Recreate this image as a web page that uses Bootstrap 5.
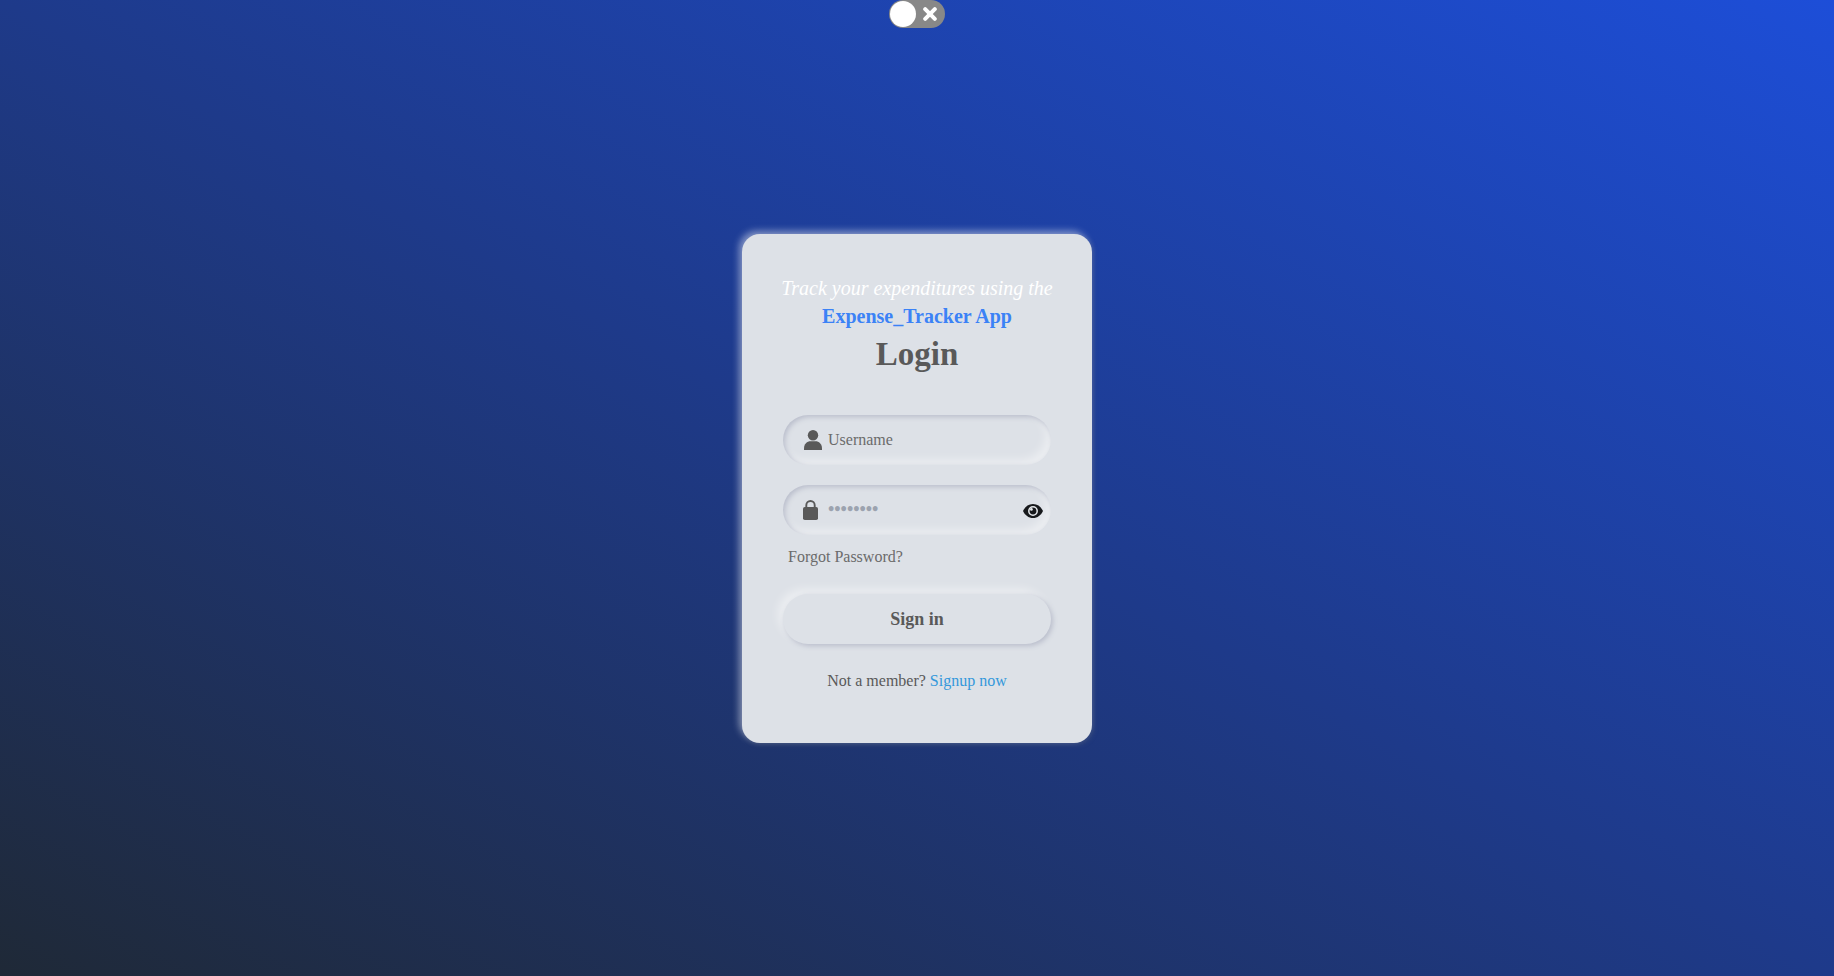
<!DOCTYPE html>
<html lang="en">
<head>
<meta charset="utf-8">
<meta name="viewport" content="width=device-width, initial-scale=1">
<title>Expense_Tracker App - Login</title>
<link href="https://cdn.jsdelivr.net/npm/bootstrap@5.3.0/dist/css/bootstrap.min.css" rel="stylesheet">
<style>
  body {
    font-family: "Liberation Serif", "Times New Roman", serif;
    color: #595959;
    background: linear-gradient(to top right, #1f2937, #1e3a8a, #1d4ed8) no-repeat;
  }
  .theme-switch { top: 0; left: 0; right: 0; }
  .theme-switch label { width: 56px; height: 28px; border-radius: 14px; background: #888; cursor: pointer; padding: 1px; }
  .theme-switch .knob { width: 26px; height: 26px; border-radius: 50%; background: #fff; }
  .theme-switch svg { width: 14px; height: 14px; margin: 0 7px 0 auto; }
  .login-panel {
    width: 350px;
    padding: 40px 41px;
    background: #dde1e7;
    border-radius: 18px;
    box-shadow: -3px -3px 7px #ffffff73, 2px 2px 5px rgba(94, 104, 121, .288);
  }
  .tagline { font-size: 20px; line-height: 28px; margin: 0 -10px; }
  .brand-name { color: #3b82f6; }
  .login-title { font-size: 33px; line-height: 48px; margin-bottom: 37px; }
  .login-fields { gap: 20px; }
  .pill-field { height: 50px; }
  .pill-input.form-control {
    height: 50px;
    padding: 0 45px;
    font-size: 16px;
    color: #595959;
    background: #dde1e7;
    border: 0;
    border-radius: 25px;
    box-shadow: inset 2px 2px 5px #babecc, inset -5px -5px 10px #ffffff73;
  }
  .pill-input::placeholder { color: #6b6b6b; opacity: 1; }
  .pill-input[type=password] { font-size: 18px; font-weight: 700; }
  .pill-input[type=password]::placeholder { color: #9ca3af; }
  .field-icon { top: 0; bottom: 0; left: 20px; pointer-events: none; }
  .eye-toggle { top: 2px; bottom: 0; right: 8px; }
  .forgot-link { margin: 10px 0 25px 5px; }
  .forgot-link a { color: #6b6b6b; }
  .sign-btn.btn {
    height: 50px;
    padding: 2px 0 0;
    font-size: 18px;
    font-weight: 700;
    color: #595959;
    background: #dde1e7;
    border: 0;
    border-radius: 25px;
    box-shadow: 2px 2px 5px #babecc, -5px -5px 10px #ffffff73;
  }
  .signup-line { margin: 25px 0 10px; }
  .signup-line a { color: #3498db; }
</style>
</head>
<body class="min-vh-100 d-flex align-items-center justify-content-center">
  <div class="theme-switch position-absolute d-flex justify-content-center">
    <input type="checkbox" role="switch" id="theme" class="visually-hidden">
    <label for="theme" class="d-flex align-items-center" aria-label="Toggle theme">
      <span class="knob"></span>
      <svg viewBox="0 0 14 14" aria-hidden="true"><path d="M2.200 2.200 11.800 11.800M11.800 2.200 2.200 11.800" stroke="#fff" stroke-width="4" stroke-linecap="round"/></svg>
    </label>
  </div>
  <main class="login-panel text-center">
    <p class="tagline text-nowrap"><em class="text-white">Track your expenditures using the</em><br><strong class="brand-name">Expense_Tracker App</strong></p>
    <h1 class="login-title fw-bold">Login</h1>
    <form>
      <div class="login-fields d-flex flex-column">
        <div class="pill-field position-relative">
          <input type="text" id="username" class="form-control pill-input" placeholder="Username">
          <label for="username" class="field-icon position-absolute d-flex align-items-center" aria-label="Username">
            <svg width="20" height="20" viewBox="0 0 20 20" fill="#595959"><circle cx="10" cy="5.2" r="5.2"/><path d="M1 20v-1.500C1 14 4 11.300 7.600 11.300h4.800C16 11.300 19 14 19 18.500V20z"/></svg>
          </label>
        </div>
        <div class="pill-field position-relative">
          <input type="password" id="password" class="form-control pill-input" placeholder="••••••••">
          <label for="password" class="field-icon position-absolute d-flex align-items-center" aria-label="Password">
            <svg width="15" height="20" viewBox="0 0 15 20"><path d="M3.300 8V5.200a4.200 4.200 0 0 1 8.400 0V8" fill="none" stroke="#595959" stroke-width="1.900"/><rect y="7" width="15" height="13" rx="1.800" fill="#595959"/></svg>
          </label>
          <button type="button" class="eye-toggle btn p-0 border-0 position-absolute d-flex align-items-center" aria-label="Show password">
            <svg width="20" height="14" viewBox="0 0 20 14"><path d="M0 7C2 2.700 5.500 0 10 0s8 2.700 10 7c-2 4.300-5.500 7-10 7S2 11.300 0 7z" fill="#17191c"/><circle cx="10" cy="7" r="4.200" fill="#17191c" stroke="#e6e9ed" stroke-width="1.500"/><circle cx="8.400" cy="5.400" r="1.400" fill="#e6e9ed"/></svg>
          </button>
        </div>
      </div>
      <div class="forgot-link text-start"><a href="#" class="text-decoration-none">Forgot Password?</a></div>
      <button type="submit" class="sign-btn btn w-100 d-block">Sign in</button>
      <div class="signup-line">Not a member? <a href="#" class="text-decoration-none">Signup now</a></div>
    </form>
  </main>
<script src="https://cdn.jsdelivr.net/npm/bootstrap@5.3.0/dist/js/bootstrap.bundle.min.js"></script>
</body>
</html>
